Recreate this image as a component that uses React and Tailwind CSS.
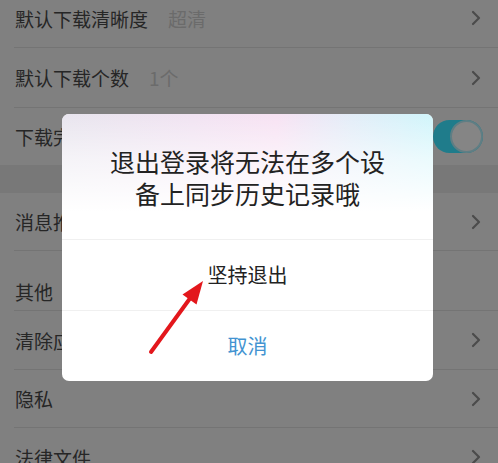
import React from "react";

const font = { fontFamily: '"Noto Sans CJK SC", "Noto Sans", sans-serif' };

function Chevron() {
  return (
    <svg width="10" height="16" viewBox="0 0 10 16" className="shrink-0">
      <polyline points="2,2 8,8 2,14" fill="none" stroke="#4b4b4b" strokeWidth="2.2" strokeLinecap="round" strokeLinejoin="round" />
    </svg>
  );
}

function Row({ label, value, right = "chevron", h = "h-[59px]" }) {
  return (
    <div className={`${h} flex items-center pl-[15px] pr-[17px]`}>
      <div className="flex-1 flex items-center">
        <span className="text-[19px] text-[#262626] leading-none">{label}</span>
        {value && <span className="ml-[20px] text-[19px] text-[#6b6b6b] leading-none">{value}</span>}
      </div>
      {right === "chevron" ? <Chevron /> : null}
      {right === "toggle" ? (
        <div className="relative -mr-[2px] w-[50px] h-[33px] rounded-full bg-[#1f7c8b]">
          <div className="absolute right-0 top-0 w-[33px] h-[33px] rounded-full bg-[#858585] border-[2px] border-[#5f7e84]" />
        </div>
      ) : null}
    </div>
  );
}

function Divider() {
  return <div className="h-px ml-[14px] bg-[#747474]" />;
}

export default function App() {
  return (
    <div className="relative w-[498px] h-[463px] overflow-hidden bg-[#808080]" style={font}>
      <div className="-mt-[11px]">
        <Row label="默认下载清晰度" value="超清" h="h-[58px]" />
        <Divider />
        <Row label="默认下载个数" value="1个" />
        <Divider />
        <Row label="下载完成提醒" right="toggle" h="h-[57px]" />
        <div className="h-[28px] bg-[#787878]" />
        <Row label="消息推送设置" h="h-[57px]" />
        <Divider />
        <div className="h-[59px] flex items-end pl-[15px] pb-[4px]">
          <span className="text-[19px] text-[#262626] leading-[28px]">其他</span>
        </div>
        <Divider />
        <Row label="清除应用缓存" h="h-[58px]" />
        <Divider />
        <Row label="隐私" h="h-[57px]" />
        <Divider />
        <Row label="法律文件" h="h-[58px]" />
      </div>

      <div className="absolute left-[62px] top-[114px] w-[371px] rounded-[7px] overflow-hidden bg-white">
        <div className="h-[125px] flex flex-col items-center justify-center text-center bg-[linear-gradient(to_bottom,rgba(255,255,255,0)_0%,rgba(255,255,255,0.55)_35%,#ffffff_78%),linear-gradient(to_right,#e8e5ee_0%,#f1e3f2_35%,#f7e2f3_58%,#e3edf8_78%,#d0f5fb_100%)]">
          <div className="text-[25px] leading-[32px] text-[#222222]">
            退出登录将无法在多个设
            <br />
            备上同步历史记录哦
          </div>
        </div>
        <div className="h-px bg-[#f0f0f0]" />
        <div className="h-[70px] flex items-center justify-center text-[20px] text-[#222222]">坚持退出</div>
        <div className="h-px bg-[#f0f0f0]" />
        <div className="h-[70px] flex items-center justify-center text-[20px] text-[#4293d1]">取消</div>
      </div>

      <svg className="absolute left-0 top-0 pointer-events-none" width="498" height="463" viewBox="0 0 498 463">
        <line x1="151" y1="352" x2="191" y2="297" stroke="#e3171c" strokeWidth="4" strokeLinecap="round" />
        <polygon points="203,281 182.5,294.5 196.5,304.5" fill="#e3171c" />
      </svg>
    </div>
  );
}
